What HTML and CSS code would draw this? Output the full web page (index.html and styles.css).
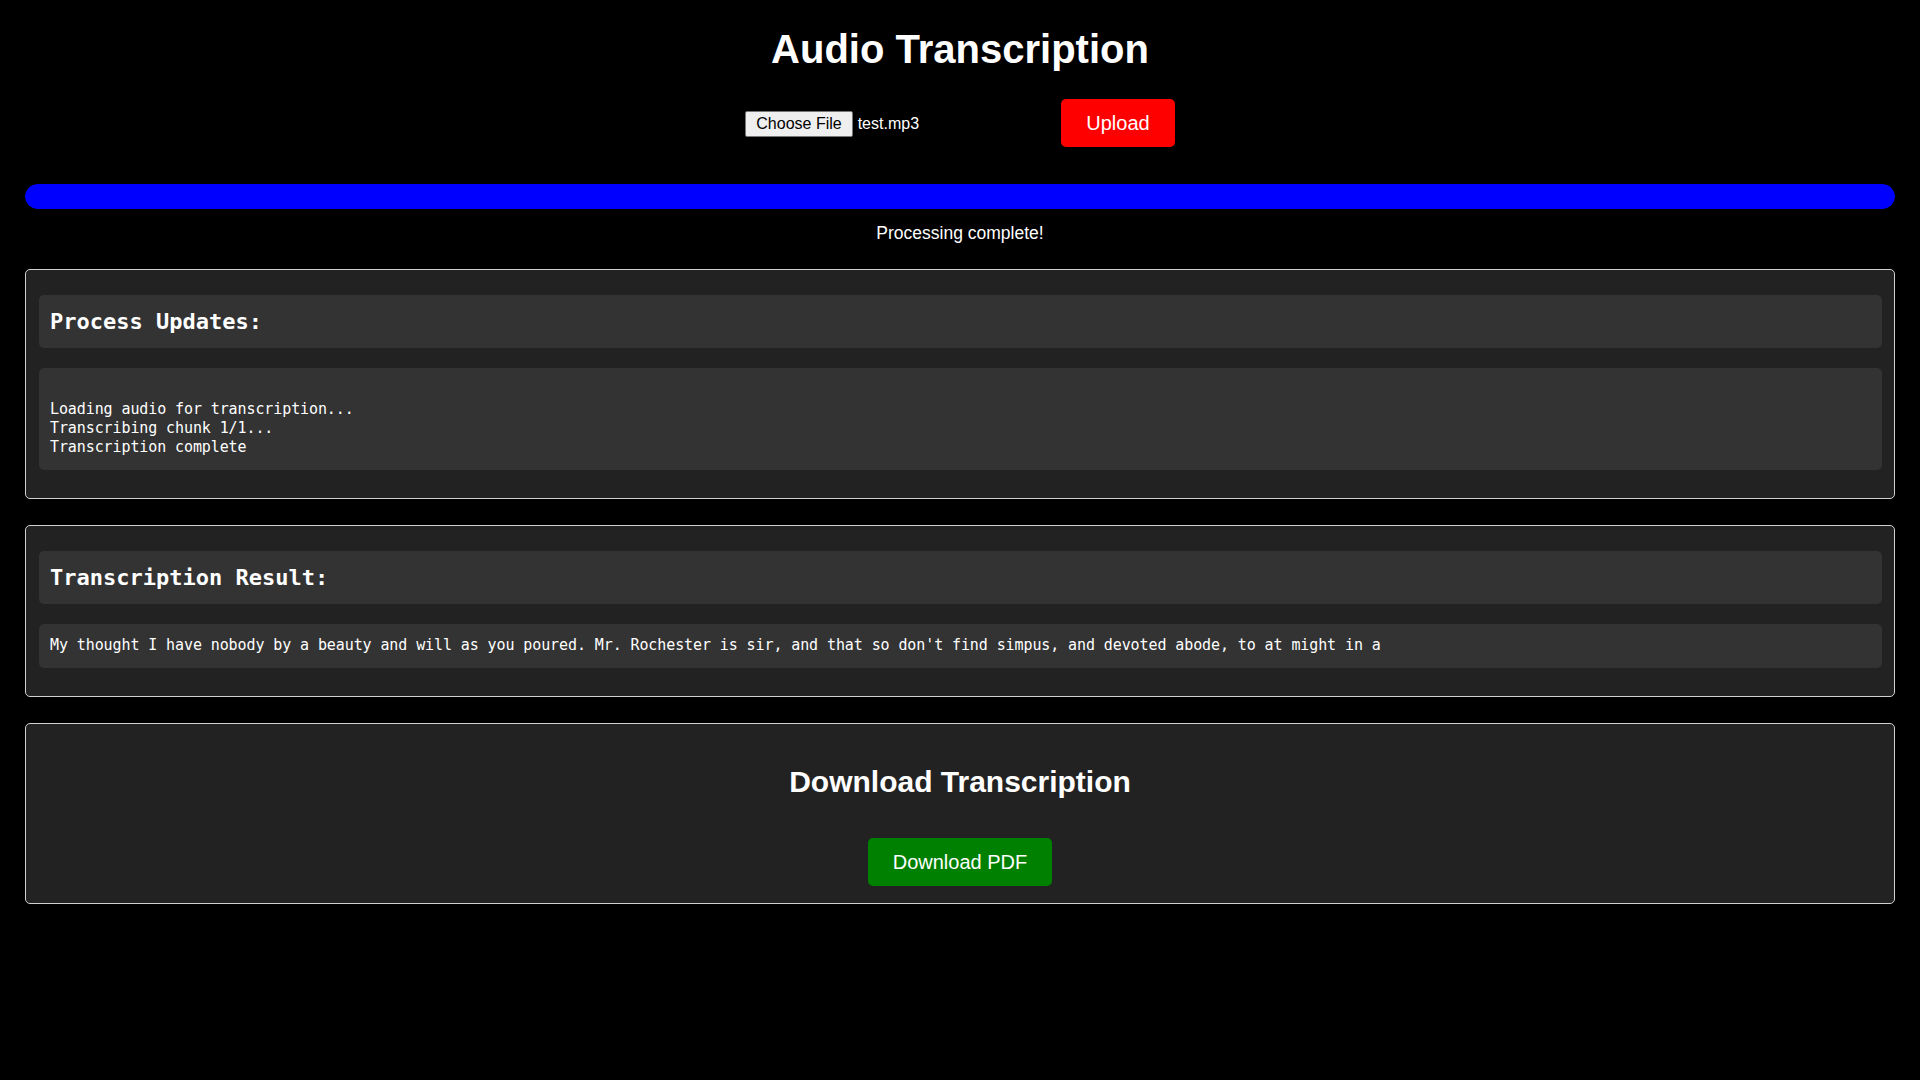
FILE: index.html
```html
<!DOCTYPE html>
<html lang="en">
<head>
<meta charset="utf-8">
<title>Audio Transcription</title>
<link rel="stylesheet" href="styles.css">
</head>
<body>
  <h1 class="title">Audio Transcription</h1>

  <form class="upload-row">
    <div class="file-field">
      <span class="file-btn">Choose File</span>
      <span class="file-name">test.mp3</span>
    </div>
    <button type="button" class="btn btn-upload">Upload</button>
  </form>

  <div class="progress"><div class="progress-fill" style="width: 100%"></div></div>
  <p class="status">Processing complete!</p>

  <section class="card">
    <h2 class="card-head">Process Updates:</h2>
    <div class="log"><br>Loading audio for transcription...<br>Transcribing chunk 1/1...<br>Transcription complete</div>
  </section>

  <section class="card">
    <h2 class="card-head">Transcription Result:</h2>
    <div class="result">My thought I have nobody by a beauty and will as you poured. Mr. Rochester is sir, and that so don't find simpus, and devoted abode, to at might in a</div>
  </section>

  <section class="card card-download">
    <h2 class="download-title">Download Transcription</h2>
    <button type="button" class="btn btn-download">Download PDF</button>
  </section>
</body>
</html>
```

FILE: styles.css
```css
* { box-sizing: border-box; }

html, body {
  background: #000;
}

body {
  margin: 0;
  padding: 0 25px 40px;
  color: #fff;
  font-family: "Liberation Sans", Arial, sans-serif;
}

.title {
  margin: 26px 0 0;
  font-size: 40px;
  line-height: 46px;
  font-weight: bold;
  text-align: center;
}

.upload-row {
  margin: 27px 0 0;
  display: flex;
  justify-content: center;
  align-items: center;
  gap: 10px;
}

.file-field {
  width: 306px;
  display: flex;
  align-items: center;
  padding-top: 2px;
  font-size: 16px;
}

.file-btn {
  display: inline-block;
  height: 26px;
  line-height: 24px;
  padding: 0 10px;
  background: #efefef;
  color: #000;
  border: 1px solid #767676;
  border-radius: 2px;
}

.file-name {
  margin-left: 5px;
  color: #fff;
}

.btn {
  height: 48px;
  padding: 0 25px;
  border: none;
  border-radius: 5px;
  color: #fff;
  font-family: "Liberation Sans", Arial, sans-serif;
  font-size: 20px;
  line-height: 48px;
  cursor: pointer;
}

.btn-upload { background: #ff0000; }
.btn-download { background: #008000; margin-top: 39px; }

.progress {
  margin-top: 37px;
  height: 25px;
  border-radius: 12.5px;
  background: #000;
  overflow: hidden;
}

.progress-fill {
  height: 100%;
  background: #0000ff;
  border-radius: 12.5px;
}

.status {
  margin: 14px 0 0;
  font-size: 17.5px;
  line-height: 20px;
  text-align: center;
}

.card {
  margin-top: 26px;
  background: #222;
  border: 1px solid #d0d0d0;
  border-radius: 5px;
  padding: 25px 12px 28px 13px;
}

.card-head {
  margin: 0;
  height: 53px;
  line-height: 53px;
  padding: 0 11px;
  background: #333;
  border-radius: 5px;
  font-family: "DejaVu Sans Mono", "Liberation Mono", monospace;
  font-size: 22px;
  font-weight: bold;
}

.log, .result {
  margin-top: 20px;
  background: #333;
  border-radius: 5px;
  padding: 13px 11px 13px;
  font-family: "DejaVu Sans Mono", "Liberation Mono", monospace;
  font-size: 15px;
  letter-spacing: -0.1px;
  line-height: 19px;
  white-space: nowrap;
}

.result {
  padding: 12px 11px 13px;
}

.card-download {
  padding: 41px 13px 17px;
  text-align: center;
}

.download-title {
  margin: 0;
  font-size: 30px;
  line-height: 34px;
  font-weight: bold;
}
```
